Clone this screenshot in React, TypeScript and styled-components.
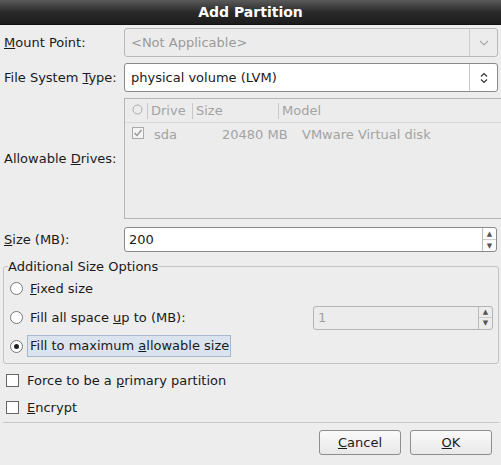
import React from "react";
import styled, { createGlobalStyle } from "styled-components";

const G = createGlobalStyle`
  body { margin:0; background:#ededed; font-family:"DejaVu Sans",sans-serif; font-size:13px; color:#1a1a1a; }
`;
const Win = styled.div`width:501px;height:465px;display:flex;flex-direction:column;background:#ededed;overflow:hidden;`;
const Title = styled.div`height:24px;flex:none;display:flex;align-items:center;justify-content:center;color:#fff;font-weight:bold;font-size:14px;
  background:linear-gradient(#5a5a5a,#2a2a2a 50%,#1c1c1c);border-bottom:1px solid #111;`;
const Body = styled.div`display:flex;flex-direction:column;padding:3px 2px 0 3px;`;
const Row = styled.div<{ h: number; mt?: number }>`display:flex;align-items:center;height:${p => p.h}px;margin-top:${p => p.mt ?? 0}px;`;
const Label = styled.div`width:120px;flex:none;padding-left:1px;`;
const Combo = styled.div<{ disabled?: boolean }>`flex:1;height:100%;box-sizing:border-box;border:1px solid ${p => p.disabled ? "#b9b9b9" : "#8a8a8a"};border-radius:3px;
  background:${p => p.disabled ? "#ececec" : "#fff"};color:${p => p.disabled ? "#9a9a9a" : "#1a1a1a"};display:flex;align-items:center;padding-left:6px;margin-right:1px;`;
const ComboText = styled.div`flex:1;`;
const ComboBtn = styled.div<{ disabled?: boolean }>`width:27px;height:100%;border-left:1px solid ${p => p.disabled ? "#cfcfcf" : "#c8c8c8"};display:flex;align-items:center;justify-content:center;color:${p => p.disabled ? "#aaa" : "#333"};`;
const Tree = styled.div`flex:1;height:100%;box-sizing:border-box;border:1px solid #b5b5b5;background:#ececec;color:#a3a3a3;display:flex;flex-direction:column;`;
const THead = styled.div`display:flex;height:23px;border-bottom:1px solid #d8d8d8;align-items:center;`;
const TCell = styled.div<{ w: number; sep?: boolean }>`width:${p => p.w}px;flex:none;padding-left:${p => p.sep ? 3 : 0}px;border-left:${p => p.sep ? "1px solid #c8c8c8" : "none"};box-sizing:border-box;height:16px;line-height:16px;`;
const TRow = styled.div`display:flex;height:24px;align-items:center;`;
const Spin = styled.div`flex:1;height:100%;box-sizing:border-box;border:1px solid #8a8a8a;border-radius:3px;background:#fff;display:flex;align-items:center;margin-right:2px;`;
const SpinText = styled.div<{ disabled?: boolean }>`flex:1;padding-left:4px;color:${p => p.disabled ? "#a0a0a0" : "#1a1a1a"};`;
const SpinBtns = styled.div`width:13px;height:100%;border-left:1px solid #bbb;display:flex;flex-direction:column;`;
const SpinBtn = styled.div`flex:1;display:flex;align-items:center;justify-content:center;font-size:7px;color:#555;&+&{border-top:1px solid #ccc;}`;
const Frame = styled.fieldset`margin:7px 0 0 0;padding:0 0 4px 6px;border:1px solid #c3c3c3;border-radius:3px;height:105px;box-sizing:border-box;`;
const Legend = styled.legend`padding:0;margin-left:-2px;`;
const Opt = styled.div<{ sel?: boolean }>`display:flex;align-items:center;height:${p => p.sel ? 24 : 29}px;`;
const Radio = styled.div<{ on?: boolean }>`width:11px;height:11px;border:1px solid #777;border-radius:50%;background:#fff;margin-right:7px;flex:none;position:relative;
  &::after{content:"";display:${p => p.on ? "block" : "none"};position:absolute;left:3px;top:3px;width:5px;height:5px;border-radius:50%;background:#222;}`;
const OptText = styled.div<{ sel?: boolean }>`${p => p.sel ? "background:#dbe3ee;border:1px solid #a8b8cc;padding:2px 1px 3px 2px;margin-left:-3px;" : ""}`;
const SmallSpin = styled.div`width:180px;height:24px;box-sizing:border-box;border:1px solid #b4b4b4;border-radius:3px;background:#ececec;display:flex;align-items:center;margin-left:auto;margin-right:5px;`;
const Check = styled.div`display:flex;align-items:center;height:27px;padding-left:3px;`;
const Box = styled.div`width:11px;height:11px;border:1px solid #666;background:#fff;margin-right:8px;`;
const Sep = styled.div`height:1px;background:#c8c8c8;margin-top:1px;`;
const Buttons = styled.div`display:flex;justify-content:flex-end;gap:9px;padding:7px 7px 0 0;`;
const Btn = styled.div`width:82px;height:25px;box-sizing:border-box;border:1px solid #8e8e8e;border-radius:3px;background:linear-gradient(#fafafa,#e8e8e8);display:flex;align-items:center;justify-content:center;`;
const U = styled.span`text-decoration:underline;`;

export default function App() {
  return (
    <Win>
      <G />
      <Title>Add Partition</Title>
      <Body>
        <Row h={29}>
          <Label><U>M</U>ount Point:</Label>
          <Combo disabled><ComboText>&lt;Not Applicable&gt;</ComboText><ComboBtn disabled>
            <svg width="10" height="6" viewBox="0 0 10 6"><path d="M1 1l4 4 4-4" fill="none" stroke="#aaa" strokeWidth="1.2"/></svg></ComboBtn></Combo>
        </Row>
        <Row h={29} mt={6}>
          <Label>File System <U>T</U>ype:</Label>
          <Combo><ComboText>physical volume (LVM)</ComboText><ComboBtn>
            <svg width="8" height="12" viewBox="0 0 8 12"><path d="M1 4.5l3-3 3 3M1 7.5l3 3 3-3" fill="none" stroke="#333" strokeWidth="1.2"/></svg></ComboBtn></Combo>
        </Row>
        <Row h={121} mt={6}>
          <Label>Allowable <U>D</U>rives:</Label>
          <Tree>
            <THead>
              <TCell w={22} style={{ paddingLeft: 7 }}>
                <svg width="11" height="11"><circle cx="5.5" cy="5.5" r="4.5" fill="none" stroke="#aaa" /></svg>
              </TCell>
              <TCell w={45} sep>Drive</TCell>
              <TCell w={86} sep>Size</TCell>
              <TCell w={200} sep>Model</TCell>
            </THead>
            <TRow>
              <TCell w={29} style={{ paddingLeft: 7 }}>
                <svg width="12" height="12"><rect x="0.5" y="0.5" width="11" height="11" fill="#f4f4f4" stroke="#aaa"/><path d="M2.5 6l2.5 2.5 4.5-5.5" fill="none" stroke="#999" strokeWidth="1.5"/></svg>
              </TCell>
              <TCell w={68}>sda</TCell>
              <TCell w={80}>20480 MB</TCell>
              <TCell w={200}>VMware Virtual disk</TCell>
            </TRow>
          </Tree>
        </Row>
        <Row h={25} mt={8}>
          <Label><U>S</U>ize (MB):</Label>
          <Spin><SpinText>200</SpinText><SpinBtns><SpinBtn>▲</SpinBtn><SpinBtn>▼</SpinBtn></SpinBtns></Spin>
        </Row>
        <Frame>
          <Legend>Additional Size Options</Legend>
          <Opt><Radio /><OptText><U>F</U>ixed size</OptText></Opt>
          <Opt><Radio /><OptText>Fill all space <U>u</U>p to (MB):</OptText>
            <SmallSpin><SpinText disabled>1</SpinText><SpinBtns><SpinBtn>▲</SpinBtn><SpinBtn>▼</SpinBtn></SpinBtns></SmallSpin></Opt>
          <Opt sel style={{ marginTop: 2 }}><Radio on /><OptText sel>Fill to maximum <U>a</U>llowable size</OptText></Opt>
        </Frame>
        <Check style={{ marginTop: 3 }}><Box /><span>Force to be a{" "}<U>p</U>rimary partition</span></Check>
        <Check><Box /><U>E</U>ncrypt</Check>
        <Sep />
        <Buttons><Btn><U>C</U>ancel</Btn><Btn><U>O</U>K</Btn></Buttons>
      </Body>
    </Win>
  );
}
